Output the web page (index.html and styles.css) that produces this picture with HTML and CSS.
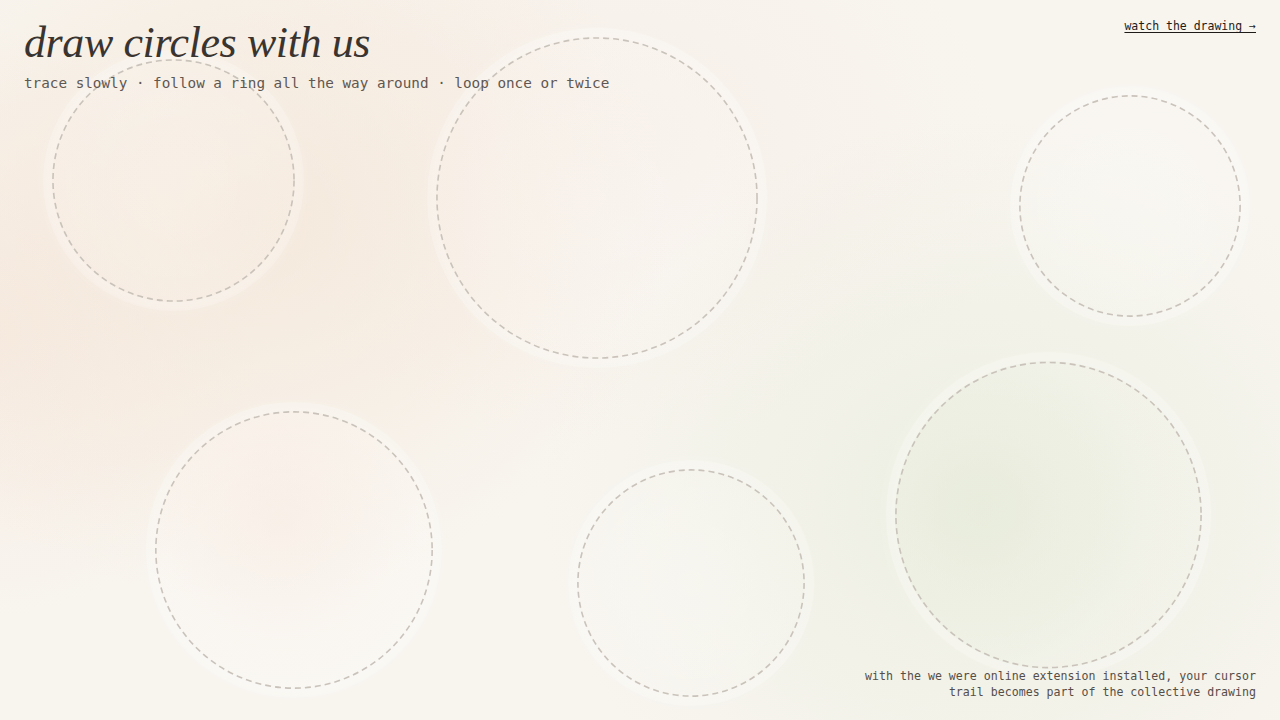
FILE: index.html
```html
<!DOCTYPE html>
<html>
<head>
<meta charset="utf-8">
<link rel="stylesheet" href="styles.css">
</head>
<body>
<div class="page">
  <div class="canvas">
    <div class="ring r1"><svg viewBox="0 0 100 100"><circle cx="50" cy="50" r="49.6" /></svg></div>
    <div class="ring r2"><svg viewBox="0 0 100 100"><circle cx="50" cy="50" r="49.7" /></svg></div>
    <div class="ring r3"><svg viewBox="0 0 100 100"><circle cx="50" cy="50" r="49.6" /></svg></div>
    <div class="ring r4"><svg viewBox="0 0 100 100"><circle cx="50" cy="50" r="49.7" /></svg></div>
    <div class="ring r5"><svg viewBox="0 0 100 100"><circle cx="50" cy="50" r="49.6" /></svg></div>
    <div class="ring r6"><svg viewBox="0 0 100 100"><circle cx="50" cy="50" r="49.7" /></svg></div>
  </div>
  <header class="top">
    <div class="intro">
      <h1 class="title">draw circles with us</h1>
      <p class="sub">trace slowly · follow a ring all the way around · loop once or twice</p>
    </div>
    <a class="watch" href="#">watch the drawing →</a>
  </header>
  <footer class="note">with the we were online extension installed, your cursor<br>trail becomes part of the collective drawing</footer>
</div>
</body>
</html>
```

FILE: styles.css
```css
html, body {
  margin: 0;
  padding: 0;
  width: 1280px;
  height: 720px;
  overflow: hidden;
}
body {
  background: #f8f5ef;
  font-family: "DejaVu Sans Mono", "Liberation Mono", monospace;
}
.page {
  position: relative;
  width: 1280px;
  height: 720px;
  display: flex;
  flex-direction: column;
  justify-content: space-between;
  box-sizing: border-box;
  padding: 18px 24px 20px 24px;
  background:
    radial-gradient(ellipse 420px 380px at 250px 220px, rgba(244, 228, 212, 0.7), rgba(244, 228, 212, 0) 100%),
    radial-gradient(ellipse 260px 300px at 0px 330px, rgba(246, 228, 216, 0.55), rgba(246, 228, 216, 0) 100%),
    radial-gradient(ellipse 440px 380px at 980px 500px, rgba(233, 237, 222, 0.75), rgba(233, 237, 222, 0) 100%),
    radial-gradient(ellipse 420px 300px at 620px 140px, rgba(247, 235, 228, 0.5), rgba(247, 235, 228, 0) 100%),
    #f8f5ef;
}
.canvas {
  position: absolute;
  inset: 0;
}
.ring {
  position: absolute;
  border-radius: 50%;
  box-shadow: 0 0 0 9px rgba(255, 255, 255, 0.22), 0 0 18px 8px rgba(255, 255, 255, 0.18);
  background: radial-gradient(circle at 50% 50%, rgba(255, 255, 255, 0.22), rgba(255, 255, 255, 0.12) 70%, rgba(255, 255, 255, 0.05) 100%);
}
.ring svg {
  display: block;
  width: 100%;
  height: 100%;
  overflow: visible;
}
.ring circle {
  fill: none;
  stroke: #c9c3bb;
  stroke-width: 1.6px;
  vector-effect: non-scaling-stroke;
  stroke-dasharray: 6 4;
}
.r1 { left: 52px; top: 59px; width: 243px; height: 243px; }
.r2 { left: 436px; top: 37px; width: 322px; height: 322px; }
.r3 { left: 1019px; top: 95px; width: 222px; height: 222px; }
.r4 { left: 155px; top: 411px; width: 278px; height: 278px; }
.r5 { left: 577px; top: 469px; width: 228px; height: 228px; }
.r6 { left: 895px; top: 361px; width: 307px; height: 308px; }
.r4 { background: radial-gradient(circle at 45% 40%, rgba(250, 236, 228, 0.45), rgba(255, 255, 255, 0.25) 75%, rgba(255, 255, 255, 0.1) 100%); }
.r6 { background: radial-gradient(circle at 28% 48%, rgba(230, 235, 216, 0.6), rgba(240, 242, 232, 0.3) 60%, rgba(255, 255, 255, 0.1) 100%); }
.top {
  position: relative;
  display: flex;
  justify-content: space-between;
  align-items: flex-start;
}
.title {
  margin: 0;
  font-family: "Liberation Serif", serif;
  font-style: italic;
  font-weight: normal;
  font-size: 44px;
  line-height: 50px;
  color: #3a3430;
  letter-spacing: -0.4px;
}
.sub {
  margin: 6px 0 0 0;
  font-size: 14.3px;
  line-height: 18px;
  color: #5f5751;
}
.watch {
  margin-top: 0px;
  font-size: 11.5px;
  line-height: 16px;
  color: #1f1b18;
  font-weight: normal;
  text-decoration: underline;
  text-decoration-thickness: 1px;
  text-underline-offset: 2px;
}
.note {
  position: relative;
  align-self: flex-end;
  text-align: right;
  font-size: 11.6px;
  line-height: 16px;
  color: #554e48;
}
```
